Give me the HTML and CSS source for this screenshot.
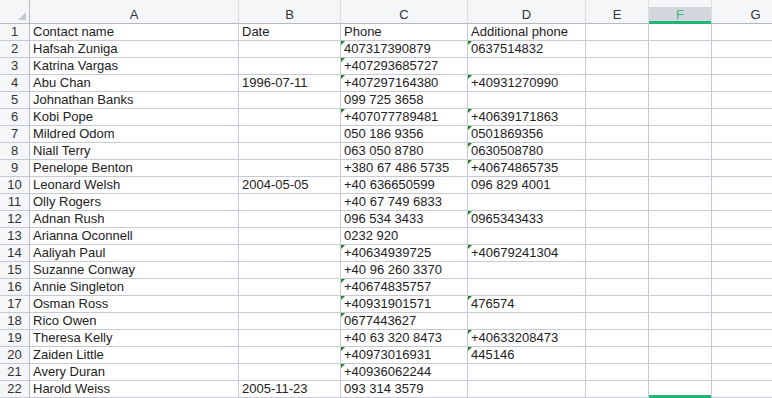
FILE: index.html
```html
<!DOCTYPE html>
<html lang="en">
<head>
  <meta charset="UTF-8">
  <title>Contacts</title>
  <link rel="stylesheet" href="styles.css">
</head>
<body>
  <table class="sheet">
    <colgroup>
      <col class="c-num"><col class="c-a"><col class="c-b"><col class="c-c"><col class="c-d"><col class="c-e"><col class="c-f"><col class="c-g">
    </colgroup>
    <thead>
      <tr>
        <th class="corner"><span class="corner-mark"></span></th>
        <th>A</th><th>B</th><th>C</th><th>D</th><th>E</th><th class="active">F</th><th>G</th>
      </tr>
    </thead>
    <tbody>
      <tr><th>1</th><td>Contact name</td><td>Date</td><td>Phone</td><td>Additional phone</td><td></td><td></td><td></td></tr>
      <tr><th>2</th><td>Hafsah Zuniga</td><td></td><td class="txt">407317390879</td><td class="txt">0637514832</td><td></td><td></td><td></td></tr>
      <tr><th>3</th><td>Katrina Vargas</td><td></td><td class="txt">+407293685727</td><td></td><td></td><td></td><td></td></tr>
      <tr><th>4</th><td>Abu Chan</td><td>1996-07-11</td><td class="txt">+407297164380</td><td class="txt">+40931270990</td><td></td><td></td><td></td></tr>
      <tr><th>5</th><td>Johnathan Banks</td><td></td><td>099 725 3658</td><td></td><td></td><td></td><td></td></tr>
      <tr><th>6</th><td>Kobi Pope</td><td></td><td class="txt">+407077789481</td><td class="txt">+40639171863</td><td></td><td></td><td></td></tr>
      <tr><th>7</th><td>Mildred Odom</td><td></td><td>050 186 9356</td><td class="txt">0501869356</td><td></td><td></td><td></td></tr>
      <tr><th>8</th><td>Niall Terry</td><td></td><td>063 050 8780</td><td class="txt">0630508780</td><td></td><td></td><td></td></tr>
      <tr><th>9</th><td>Penelope Benton</td><td></td><td>+380 67 486 5735</td><td class="txt">+40674865735</td><td></td><td></td><td></td></tr>
      <tr><th>10</th><td>Leonard Welsh</td><td>2004-05-05</td><td>+40 636650599</td><td>096 829 4001</td><td></td><td></td><td></td></tr>
      <tr><th>11</th><td>Olly Rogers</td><td></td><td>+40 67 749 6833</td><td></td><td></td><td></td><td></td></tr>
      <tr><th>12</th><td>Adnan Rush</td><td></td><td>096 534 3433</td><td class="txt">0965343433</td><td></td><td></td><td></td></tr>
      <tr><th>13</th><td>Arianna Oconnell</td><td></td><td>0232 920</td><td></td><td></td><td></td><td></td></tr>
      <tr><th>14</th><td>Aaliyah Paul</td><td></td><td class="txt">+40634939725</td><td class="txt">+40679241304</td><td></td><td></td><td></td></tr>
      <tr><th>15</th><td>Suzanne Conway</td><td></td><td>+40 96 260 3370</td><td></td><td></td><td></td><td></td></tr>
      <tr><th>16</th><td>Annie Singleton</td><td></td><td class="txt">+40674835757</td><td></td><td></td><td></td><td></td></tr>
      <tr><th>17</th><td>Osman Ross</td><td></td><td class="txt">+40931901571</td><td class="txt">476574</td><td></td><td></td><td></td></tr>
      <tr><th>18</th><td>Rico Owen</td><td></td><td class="txt">0677443627</td><td></td><td></td><td></td><td></td></tr>
      <tr><th>19</th><td>Theresa Kelly</td><td></td><td>+40 63 320 8473</td><td class="txt">+40633208473</td><td></td><td></td><td></td></tr>
      <tr><th>20</th><td>Zaiden Little</td><td></td><td class="txt">+40973016931</td><td class="txt">445146</td><td></td><td></td><td></td></tr>
      <tr><th>21</th><td>Avery Duran</td><td></td><td class="txt">+40936062244</td><td></td><td></td><td></td><td></td></tr>
      <tr><th>22</th><td>Harold Weiss</td><td>2005-11-23</td><td>093 314 3579</td><td></td><td></td><td class="selected"></td><td></td></tr>
    </tbody>
  </table>
</body>
</html>
```

FILE: styles.css
```css
body {
  margin: 0;
  overflow: hidden;
  background-color: #fff;
  font-family: 'Liberation Sans', Arial, sans-serif;
  font-size: 13px;
  color: #222;
}
.sheet {
  table-layout: fixed;
  border-collapse: separate;
  border-spacing: 0;
  width: 800px;
}
.c-num { width: 30px; }
.c-a { width: 209px; }
.c-b { width: 102px; }
.c-c { width: 127px; }
.c-d { width: 118px; }
.c-e { width: 63px; }
.c-f { width: 63px; }
.c-g { width: 88px; }

th, td {
  box-sizing: border-box;
  height: 17px;
  padding: 0 3px;
  line-height: 16px;
  white-space: nowrap;
  overflow: hidden;
  text-align: left;
  font-weight: normal;
  border-right: 1px solid #c6cad6;
  border-bottom: 1px solid #c6cad6;
}
thead th {
  height: 24px;
  padding-top: 7px;
  text-align: center;
  color: #333;
  background-color: #f5f6f8;
  border-right-color: #dcdee3;
  border-bottom-color: #b4b8c0;
}
thead th.active {
  color: #3cb882;
  background: linear-gradient(#f5f6f8 7px, #d4d6dd 7px);
  border-bottom-color: #21b574;
  box-shadow: inset 0 -2px 0 #21b574;
}
tbody th {
  text-align: center;
  color: #333;
  background-color: #f5f6f8;
  border-right-color: #b4b8c0;
}
.corner {
  position: relative;
  border-right-color: #b4b8c0 !important;
}
.corner-mark {
  position: absolute;
  right: 3px;
  bottom: 3px;
  width: 0;
  height: 0;
  border-bottom: 8px solid #c6c8ce;
  border-left: 8px solid transparent;
}
td.txt {
  position: relative;
}
td.txt::before {
  content: "";
  position: absolute;
  top: 0;
  left: 0;
  width: 0;
  height: 0;
  border-top: 4px solid #178a17;
  border-right: 4px solid transparent;
}
td.selected {
  border-bottom-color: #21b574;
  box-shadow: inset 0 -2px 0 #21b574;
}
```
